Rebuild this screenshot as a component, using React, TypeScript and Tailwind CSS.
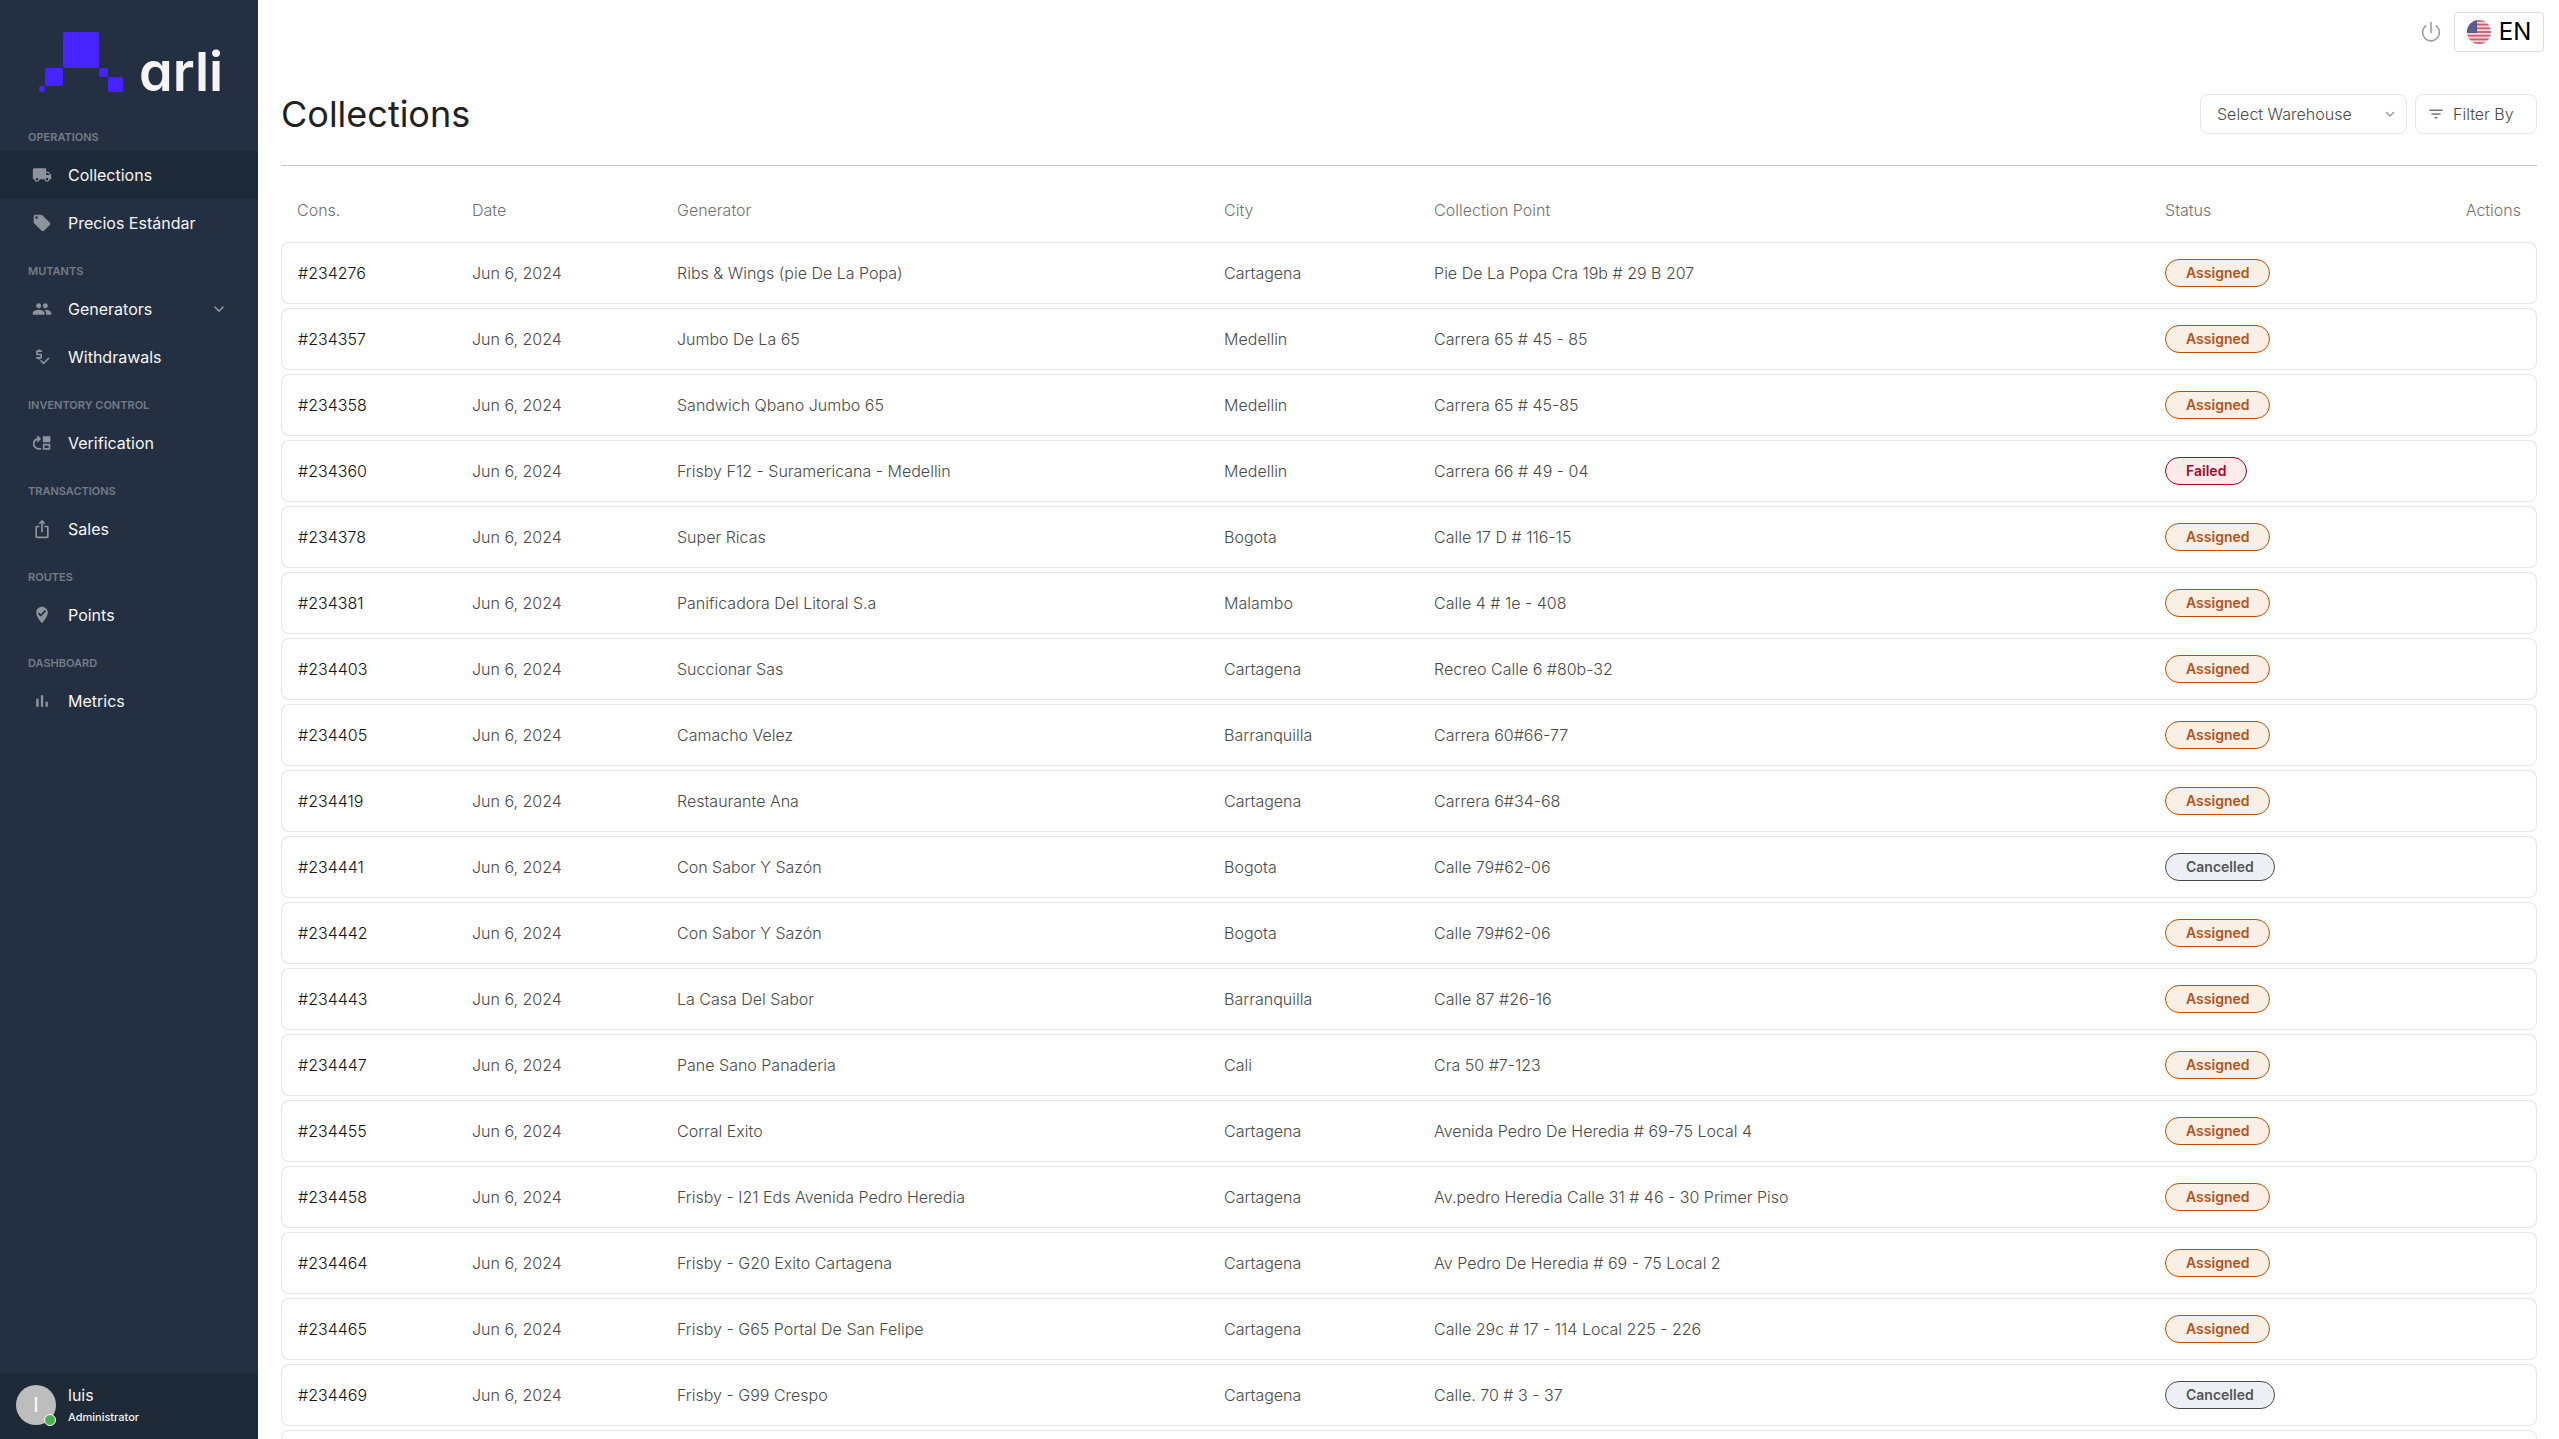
import { useState } from "react";
import type { ComponentType } from "react";
import {
    MdExpandMore,
    MdFilterList,
    MdIosShare,
    MdLocalOffer,
    MdLocalShipping,
    MdMoveUp,
    MdPeople,
    MdPriceCheck,
    MdWhereToVote,
} from "react-icons/md";

type Status = "Assigned" | "Failed" | "Cancelled";

type NavItem = { label: string; icon: ComponentType<{ className?: string }>; expandable?: boolean };

const NAV: { title: string; items: NavItem[] }[] = [
    {
        title: "Operations",
        items: [
            { label: "Collections", icon: MdLocalShipping },
            { label: "Precios Estándar", icon: MdLocalOffer },
        ],
    },
    {
        title: "Mutants",
        items: [
            { label: "Generators", icon: MdPeople, expandable: true },
            { label: "Withdrawals", icon: MdPriceCheck },
        ],
    },
    { title: "Inventory control", items: [{ label: "Verification", icon: MdMoveUp }] },
    { title: "Transactions", items: [{ label: "Sales", icon: MdIosShare }] },
    { title: "Routes", items: [{ label: "Points", icon: MdWhereToVote }] },
    { title: "Dashboard", items: [{ label: "Metrics", icon: BarsIcon }] },
];

const ROWS: { id: string; generator: string; city: string; point: string; status: Status }[] = [
    { id: "234276", generator: "Ribs & Wings (pie De La Popa)", city: "Cartagena", point: "Pie De La Popa Cra 19b # 29 B 207", status: "Assigned" },
    { id: "234357", generator: "Jumbo De La 65", city: "Medellin", point: "Carrera 65 # 45 - 85", status: "Assigned" },
    { id: "234358", generator: "Sandwich Qbano Jumbo 65", city: "Medellin", point: "Carrera 65 # 45-85", status: "Assigned" },
    { id: "234360", generator: "Frisby F12 - Suramericana - Medellin", city: "Medellin", point: "Carrera 66 # 49 - 04", status: "Failed" },
    { id: "234378", generator: "Super Ricas", city: "Bogota", point: "Calle 17 D # 116-15", status: "Assigned" },
    { id: "234381", generator: "Panificadora Del Litoral S.a", city: "Malambo", point: "Calle 4 # 1e - 408", status: "Assigned" },
    { id: "234403", generator: "Succionar Sas", city: "Cartagena", point: "Recreo Calle 6 #80b-32", status: "Assigned" },
    { id: "234405", generator: "Camacho Velez", city: "Barranquilla", point: "Carrera 60#66-77", status: "Assigned" },
    { id: "234419", generator: "Restaurante Ana", city: "Cartagena", point: "Carrera 6#34-68", status: "Assigned" },
    { id: "234441", generator: "Con Sabor Y Sazón", city: "Bogota", point: "Calle 79#62-06", status: "Cancelled" },
    { id: "234442", generator: "Con Sabor Y Sazón", city: "Bogota", point: "Calle 79#62-06", status: "Assigned" },
    { id: "234443", generator: "La Casa Del Sabor", city: "Barranquilla", point: "Calle 87 #26-16", status: "Assigned" },
    { id: "234447", generator: "Pane Sano Panaderia", city: "Cali", point: "Cra 50 #7-123", status: "Assigned" },
    { id: "234455", generator: "Corral Exito", city: "Cartagena", point: "Avenida Pedro De Heredia # 69-75 Local 4", status: "Assigned" },
    { id: "234458", generator: "Frisby - I21 Eds Avenida Pedro Heredia", city: "Cartagena", point: "Av.pedro Heredia Calle 31 # 46 - 30 Primer Piso", status: "Assigned" },
    { id: "234464", generator: "Frisby - G20 Exito Cartagena", city: "Cartagena", point: "Av Pedro De Heredia # 69 - 75 Local 2", status: "Assigned" },
    { id: "234465", generator: "Frisby - G65 Portal De San Felipe", city: "Cartagena", point: "Calle 29c # 17 - 114 Local 225 - 226", status: "Assigned" },
    { id: "234469", generator: "Frisby - G99 Crespo", city: "Cartagena", point: "Calle. 70 # 3 - 37", status: "Cancelled" },
];

const STATUS_STYLES: Record<Status, string> = {
    Assigned: "border-[#b95000] bg-[#faefe5] text-[#b3541a]",
    Failed: "border-[#a80022] bg-[#fdeaea] text-[#a3092b]",
    Cancelled: "border-[#4a4a4a] bg-[#ecf0f4] text-[#555555]",
};

const ROW_CLASS =
    "h-[62px] [&>td]:border-y [&>td]:border-[#e5e5e5] [&>td]:px-4 [&>td:first-child]:rounded-l-lg [&>td:first-child]:border-l [&>td:last-child]:rounded-r-lg [&>td:last-child]:border-r";

export default function App() {
    return (
        <div className="flex h-screen overflow-hidden bg-white font-['Inter',sans-serif] text-base text-[#212121]">
            <Sidebar />
            <main className="flex min-w-0 flex-1 flex-col overflow-hidden pr-[22px] pl-[23px]">
                <TopBar />
                <PageHeader />
                <CollectionsTable />
            </main>
        </div>
    );
}

function Sidebar() {
    const [active, setActive] = useState("Collections");

    return (
        <aside className="flex w-[258px] shrink-0 flex-col bg-[#243042] text-[#f5f5f5]">
            <a href="#" aria-label="arli" className="flex h-[113px] shrink-0 items-start pt-8 pl-[39px]">
                <Logo />
            </a>

            <nav className="flex-1">
                {NAV.map((group) => (
                    <section key={group.title}>
                        <h2 className="flex h-[38px] items-center pt-[10px] pl-7 text-[11px] font-semibold uppercase text-[#747c87]">{group.title}</h2>
                        {group.items.map(({ label, icon: Icon, expandable }) => (
                            <button
                                key={label}
                                type="button"
                                onClick={() => setActive(label)}
                                className={`flex h-12 w-full items-center gap-4 pr-[29px] pl-8 text-left ${active === label ? "bg-[#1f2a38]" : ""}`}
                            >
                                <Icon className="size-5 text-[#8e949d]" />
                                <span className="flex-1">{label}</span>
                                {expandable && <MdExpandMore className="size-5 text-[#8e949d]" />}
                            </button>
                        ))}
                    </section>
                ))}
            </nav>

            <div className="flex h-[66px] shrink-0 items-center gap-3 bg-[#1f2a38] px-4 pb-0.5">
                <div className="relative flex size-10 items-center justify-center rounded-full bg-[#bdbdbd] text-xl text-white">
                    l
                    <span className="absolute right-0 -bottom-px size-3 rounded-full border border-white bg-[#4caf50]" />
                </div>
                <div>
                    <p className="leading-6">luis</p>
                    <p className="text-[11px] leading-5 font-medium">Administrator</p>
                </div>
            </div>
        </aside>
    );
}

function Logo() {
    return (
        <svg width="184" height="64" viewBox="0 0 184 64" className="overflow-visible">
            <g fill="#4623ff">
                <rect x="24" y="0" width="36" height="36" rx="2" />
                <rect x="6" y="36" width="18" height="18" rx="2" />
                <rect x="0" y="54" width="6" height="6" rx="2" />
                <rect x="60" y="36" width="9" height="9" rx="2" />
                <rect x="69" y="45" width="15" height="15" rx="2" />
            </g>
            <text x="100" y="59" fill="#f4f4f4" className="text-[54px] font-semibold [font-feature-settings:'cv11']">
                arli
            </text>
        </svg>
    );
}

function BarsIcon({ className }: { className?: string }) {
    return (
        <svg viewBox="0 0 24 24" fill="currentColor" className={className}>
            <path d="M5 9.2h3V19H5zM10.6 5h2.8v14h-2.8zm5.6 8H19v6h-2.8z" />
        </svg>
    );
}

function TopBar() {
    return (
        <header className="-mr-[7px] flex h-[63px] shrink-0 items-center justify-end gap-[13px]">
            <button type="button" aria-label="Log out" className="text-[#9e9e9e]">
                <svg width="20" height="22" viewBox="0 0 20 22" fill="none" stroke="currentColor" strokeWidth="1.6">
                    <path d="M10 1v11" />
                    <path d="M5.2 4.6a8.4 8.4 0 1 0 9.6 0" />
                </svg>
            </button>
            <button type="button" className="flex h-10 w-[90px] items-center justify-center gap-2 rounded border border-[#dddddd] text-2xl text-black">
                <Flag />
                EN
            </button>
        </header>
    );
}

function Flag() {
    return (
        <svg width="24" height="24" viewBox="0 0 24 24">
            <clipPath id="flag-circle">
                <circle cx="12" cy="12" r="12" />
            </clipPath>
            <g clipPath="url(#flag-circle)">
                <rect width="24" height="24" fill="#f0d5d9" />
                {[0, 2, 4, 6, 8, 10, 12].map((i) => (
                    <rect key={i} y={(i * 24) / 13} width="24" height={24 / 13} fill="#cf6070" />
                ))}
                <rect width="10" height={(24 / 13) * 7} fill="#54558a" />
                {[2, 4, 6, 8].map((x) => [3, 6, 9, 11].map((y) => <circle key={`${x}-${y}`} cx={x} cy={y} r="0.4" fill="#a9aac6" />))}
            </g>
        </svg>
    );
}

function PageHeader() {
    return (
        <div className="flex h-[103px] shrink-0 items-center justify-between border-b border-[#c6c9c9]">
            <h1 className="text-4xl">Collections</h1>
            <div className="flex gap-2 text-[#4a4a4a]">
                <div className="relative">
                    <select
                        aria-label="Select Warehouse"
                        className="h-10 w-[207px] appearance-none rounded-lg border border-[#e5e5e5] bg-white pr-8 pl-4 font-light"
                    >
                        <option>Select Warehouse</option>
                    </select>
                    <MdExpandMore className="pointer-events-none absolute top-[11px] right-2 size-[18px] text-[#9e9e9e]" />
                </div>
                <button type="button" className="flex h-10 w-[122px] items-center gap-2 rounded-lg border border-[#e5e5e5] pl-[11px] font-light">
                    <MdFilterList className="size-[18px] text-[#757575]" />
                    Filter By
                </button>
            </div>
        </div>
    );
}

function CollectionsTable() {
    return (
        <table className="w-full table-fixed border-separate border-spacing-x-0 border-spacing-y-1 text-left font-light text-[#4a4a4a]">
            <colgroup>
                <col className="w-[175px]" />
                <col className="w-[205px]" />
                <col className="w-[24.25%]" />
                <col className="w-[210px]" />
                <col className="w-[32.4%]" />
                <col />
                <col />
            </colgroup>
            <thead>
                <tr className="h-[68px] text-[#717171] [&>th]:px-4 [&>th]:pt-3 [&>th]:font-light">
                    <th>Cons.</th>
                    <th>Date</th>
                    <th>Generator</th>
                    <th>City</th>
                    <th>Collection Point</th>
                    <th>Status</th>
                    <th className="text-right">Actions</th>
                </tr>
            </thead>
            <tbody>
                {ROWS.map((row) => (
                    <tr key={row.id} className={ROW_CLASS}>
                        <td className="text-[#111111]">#{row.id}</td>
                        <td>Jun 6, 2024</td>
                        <td>{row.generator}</td>
                        <td>{row.city}</td>
                        <td>{row.point}</td>
                        <td>
                            <StatusBadge status={row.status} />
                        </td>
                        <td />
                    </tr>
                ))}
                <tr className={ROW_CLASS} aria-hidden="true">
                    <td colSpan={7} />
                </tr>
            </tbody>
        </table>
    );
}

function StatusBadge({ status }: { status: Status }) {
    return <span className={`inline-flex h-7 items-center rounded-full border px-5 align-middle text-sm font-semibold ${STATUS_STYLES[status]}`}>{status}</span>;
}
